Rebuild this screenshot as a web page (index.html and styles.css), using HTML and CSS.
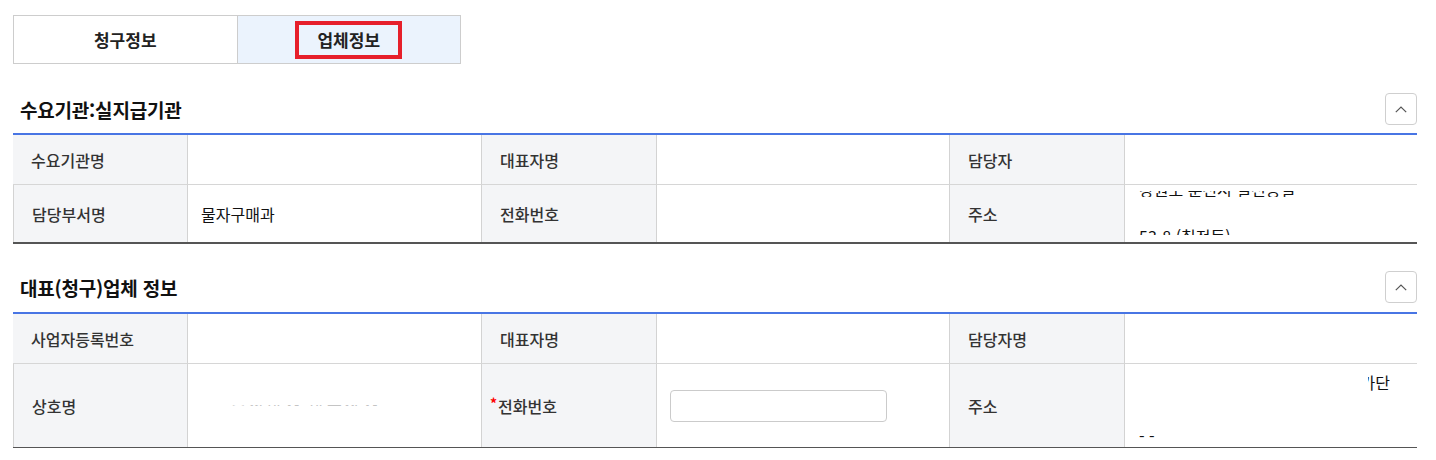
FILE: index.html
```html
<!DOCTYPE html>
<html lang="ko">
<head>
<meta charset="utf-8">
<title>업체정보</title>
<link rel="stylesheet" href="styles.css">
</head>
<body>
<div class="page">
  <div class="tabs">
    <div class="tab">청구정보</div>
    <div class="tab tab-active"><span class="mark">업체정보</span></div>
  </div>

  <section class="section">
    <div class="section-head">
      <h2 class="section-title">수요기관:실지급기관</h2>
      <button class="fold" type="button" aria-label="접기">
        <svg width="12" height="7" viewBox="0 0 12 7"><polyline points="0.8,6.2 6,1 11.2,6.2" fill="none" stroke="#555" stroke-width="1.2"/></svg>
      </button>
    </div>
    <div class="grid grid-a">
      <div class="th">수요기관명</div>
      <div class="td"></div>
      <div class="th">대표자명</div>
      <div class="td"></div>
      <div class="th">담당자</div>
      <div class="td"></div>

      <div class="th r2">담당부서명</div>
      <div class="td r2">물자구매과</div>
      <div class="th r2">전화번호</div>
      <div class="td r2"></div>
      <div class="th r2">주소</div>
      <div class="td r2 addr">
        <div class="clip clip-a1"><div class="line">강원도 춘천시 칠전동길</div></div>
        <div class="clip clip-a2"><div class="line">53-8 (칠전동)</div></div>
      </div>
    </div>
  </section>

  <section class="section section-b">
    <div class="section-head">
      <h2 class="section-title">대표(청구)업체 정보</h2>
      <button class="fold" type="button" aria-label="접기">
        <svg width="12" height="7" viewBox="0 0 12 7"><polyline points="0.8,6.2 6,1 11.2,6.2" fill="none" stroke="#555" stroke-width="1.2"/></svg>
      </button>
    </div>
    <div class="grid grid-b">
      <div class="th">사업자등록번호</div>
      <div class="td"></div>
      <div class="th">대표자명</div>
      <div class="td"></div>
      <div class="th">담당자명</div>
      <div class="td"></div>

      <div class="th r2b">상호명</div>
      <div class="td r2b"><div class="clip clip-name"><div class="line faint">주식회사 한국상사</div></div></div>
      <div class="th r2b"><span class="req">*</span>전화번호</div>
      <div class="td r2b"><input class="input" type="text" aria-label="전화번호"></div>
      <div class="th r2b">주소</div>
      <div class="td r2b addr addr-b">
        <div class="clip-row"><div class="clip clip-b1"><span class="line">가단</span></div></div>
        <div class="clip clip-b2"><div class="line">- -</div></div>
      </div>
    </div>
  </section>
</div>
</body>
</html>
```

FILE: styles.css
```css
* { box-sizing: border-box; }

html, body {
  margin: 0;
  padding: 0;
  background: #fff;
}

body {
  font-family: "Noto Sans CJK KR", "Noto Sans", sans-serif;
  color: #222;
}

.page {
  width: 1436px;
  padding: 15px 19px 0 13px;
}

/* tabs */
.tabs {
  display: flex;
  width: 448px;
  height: 49px;
  border: 1px solid #cdcdcd;
}

.tab {
  flex: 1;
  display: flex;
  align-items: center;
  justify-content: center;
  font-size: 17px;
  font-weight: 700;
  color: #222;
  background: #fff;
}

.tab + .tab {
  border-left: 1px solid #cdcdcd;
}

.tab-active {
  background: #ebf3fd;
}

.mark {
  display: inline-block;
  border: 4px solid #e61f2b;
  padding: 4px 18px;
  line-height: 22px;
}

/* sections */
.section-head {
  display: flex;
  align-items: center;
  justify-content: space-between;
  height: 32px;
  margin: 29px 0 8px;
}

.section-b .section-head {
  margin-top: 27px;
  margin-bottom: 9px;
}

.section-title {
  margin: 0 0 0 7px;
  font-size: 19px;
  font-weight: 700;
  color: #111;
  letter-spacing: -0.2px;
}

.fold {
  width: 32px;
  height: 32px;
  padding: 0;
  border: 1px solid #cfcfcf;
  border-radius: 4px;
  background: #fff;
  display: flex;
  align-items: center;
  justify-content: center;
}

.grid {
  display: grid;
  grid-template-columns: 174px 294px 175px 293px 175px 293px;
  border-top: 2px solid #4875e4;
  border-bottom: 2px solid #555;
}

.grid-b {
  border-bottom-width: 1px;
}

.th, .td {
  height: 50px;
  border-bottom: 1px solid #d6d6d6;
  display: flex;
  align-items: center;
  font-size: 16px;
}

.th + .td, .td + .th {
  border-left: 1px solid #d3d3d3;
}

.th {
  background: #f4f5f7;
  color: #333;
  font-weight: 500;
  padding-left: 18px;
}

.td {
  background: #fff;
  color: #111;
  padding-left: 13px;
}

.r2 {
  height: 57px;
  border-bottom: none;
}

.r2b {
  height: 83px;
  border-bottom: none;
}

.req {
  color: #f00;
  font-weight: 700;
  font-size: 14px;
  margin-left: -10px;
  margin-right: 1px;
  position: relative;
  top: -3px;
}

.input {
  width: 217px;
  height: 32px;
  border: 1px solid #cbcbcb;
  border-radius: 4px;
  background: #fff;
  padding: 0 8px;
  font: inherit;
}

/* clipped (masked) address text */
.addr {
  flex-direction: column;
  align-items: flex-start;
  justify-content: flex-start;
  padding-left: 14px;
}

.clip {
  overflow: hidden;
}

.line {
  font-size: 16px;
  line-height: 20px;
  white-space: nowrap;
  color: #111;
}

.clip-a1 { height: 6px; margin-top: 6px; }
.clip-a1 .line { margin-top: -12px; }

.clip-a2 { height: 6px; margin-top: 32px; }
.clip-a2 .line { margin-top: -3px; }

.clip-name { height: 1px; margin-left: 30px; }
.clip-name .line { margin-top: -10px; color: #c4c4c4; letter-spacing: 3px; }

.clip-row {
  display: flex;
  justify-content: flex-end;
  width: 100%;
  padding-right: 27px;
  margin-top: 8px;
}

.clip-b1 {
  width: 22px;
  height: 20px;
  display: flex;
  justify-content: flex-end;
}

.clip-b2 { height: 2px; margin-top: 44px; }
.clip-b2 .line { margin-top: -10px; }
```
